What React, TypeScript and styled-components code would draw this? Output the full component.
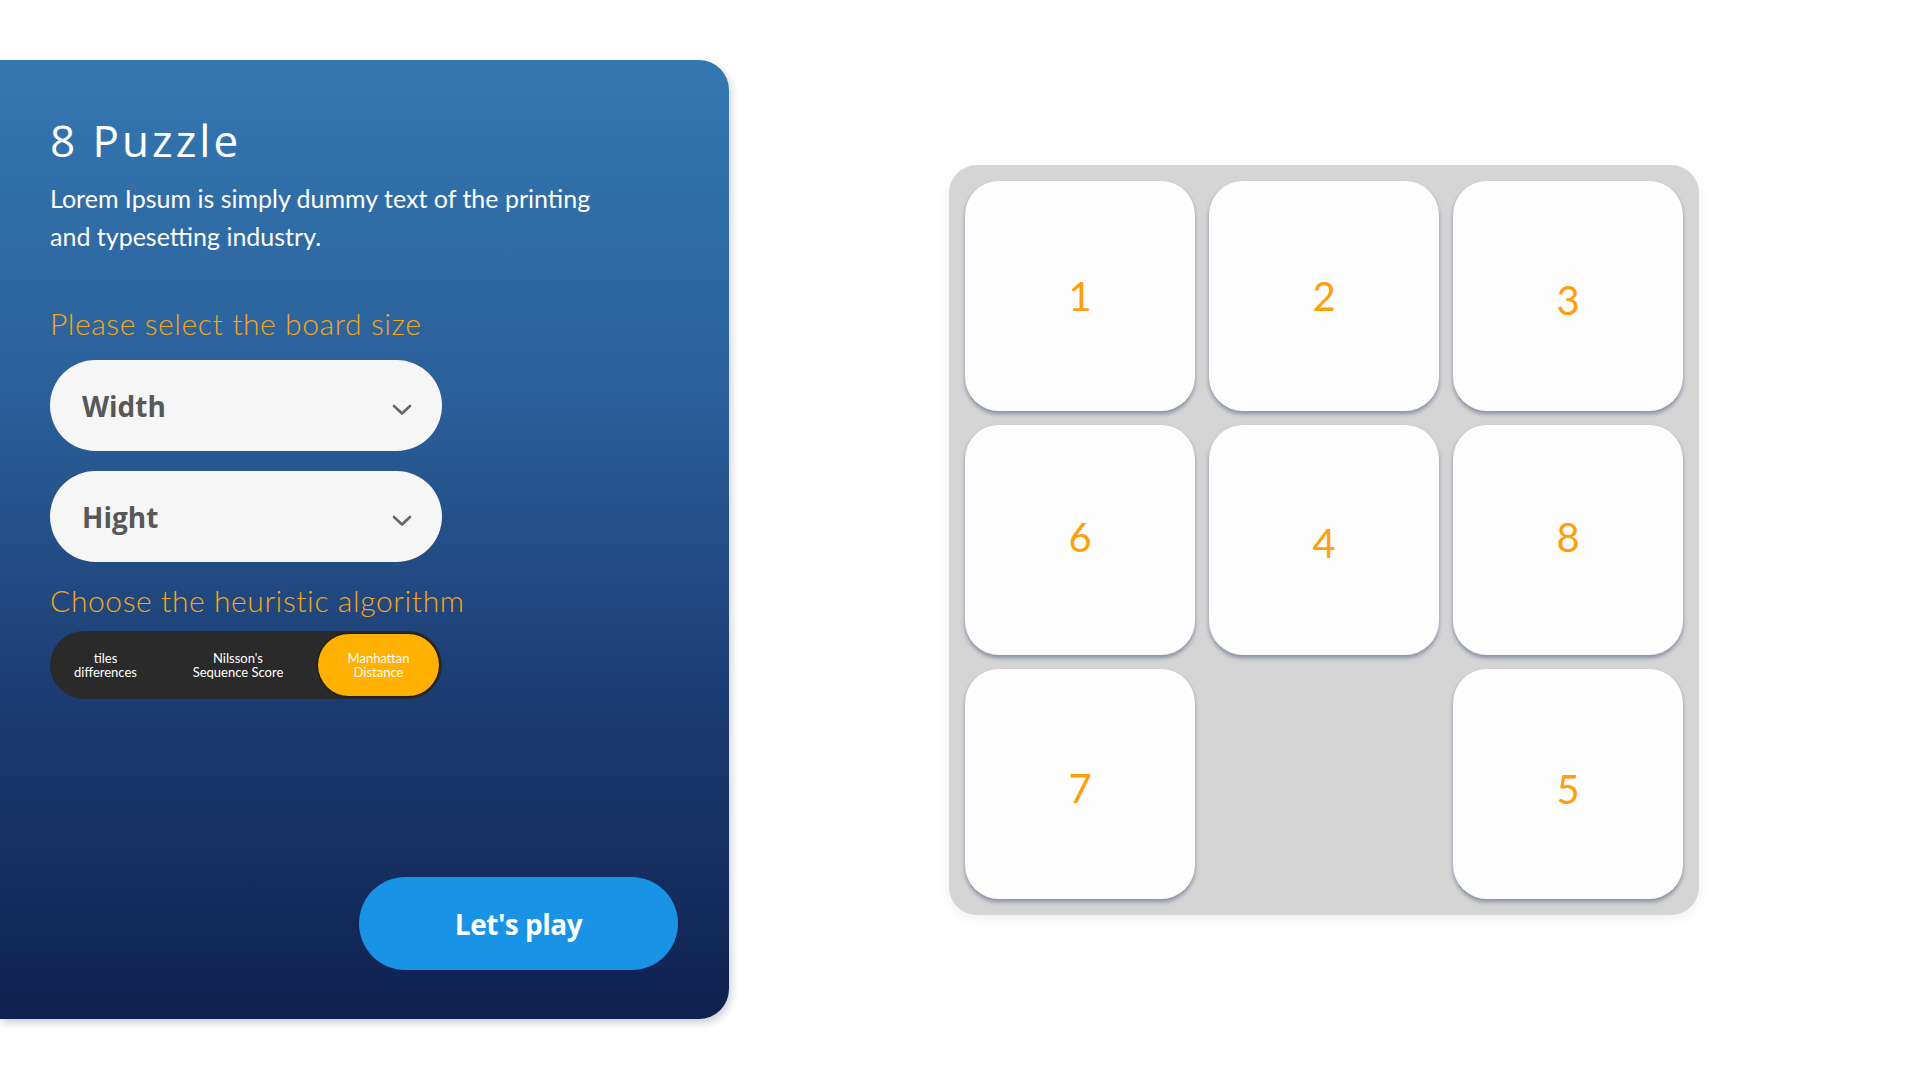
import React from 'react';
import styled, { createGlobalStyle } from 'styled-components';

const GlobalStyle = createGlobalStyle`
  html, body {
    margin: 0;
    padding: 0;
    background: #ffffff;
    font-family: 'Lato', 'Open Sans', sans-serif;
  }
`

const Page = styled.div`
  display: flex;
  align-items: flex-start;
  width: 1920px;
  height: 1080px;
  overflow: hidden;
`

const Panel = styled.div`
  width: 729px;
  height: 959px;
  margin-top: 60px;
  box-sizing: border-box;
  padding: 54px 0 49px 50px;
  display: flex;
  flex-direction: column;
  border-radius: 0 30px 30px 0;
  background: linear-gradient(180deg, #3478b2 0%, #2b5f99 35%, #1c3e74 65%, #0e2150 100%);
  box-shadow: 2px 4px 8px rgba(20, 30, 60, 0.22);
`

const Title = styled.h1`
  margin: 0;
  font-family: 'Open Sans', sans-serif;
  font-weight: 400;
  font-size: 44px;
  line-height: 52px;
  letter-spacing: 3px;
  color: #ffffff;
`

const Description = styled.p`
  margin: 13px 0 0;
  width: 565px;
  font-size: 25px;
  line-height: 38px;
  color: #ffffff;
`

const Heading = styled.h2<{ $gap: number }>`
  margin: ${p => p.$gap}px 0 0;
  font-weight: 300;
  font-size: 30px;
  line-height: 34px;
  letter-spacing: 0.6px;
  color: #f7a614;
`

const Select = styled.div<{ $gap: number }>`
  width: 392px;
  height: 91px;
  margin-top: ${p => p.$gap}px;
  box-sizing: border-box;
  padding: 0 30px 0 32px;
  display: flex;
  align-items: center;
  justify-content: space-between;
  background: #f6f6f6;
  border-radius: 46px;
`

const SelectLabel = styled.span`
  font-family: 'Open Sans', sans-serif;
  font-weight: 700;
  font-size: 28px;
  color: #585858;
`

const Chevron = styled.svg`
  width: 20px;
  height: 12px;
  margin-top: 8px;
`

const Toggle = styled.div`
  width: 392px;
  height: 68px;
  margin-top: 14px;
  box-sizing: border-box;
  padding: 3px;
  display: grid;
  grid-template-columns: 105px 160px 1fr;
  background: #2a2a2a;
  border-radius: 34px;
`

const Option = styled.div<{ $active?: boolean }>`
  display: flex;
  align-items: center;
  justify-content: center;
  text-align: center;
  font-size: 13px;
  line-height: 14px;
  color: #ffffff;
  border-radius: 31px;
  background: ${p => (p.$active ? '#ffb000' : 'transparent')};
  box-shadow: ${p => (p.$active ? '0 0 2px 1px rgba(0, 0, 0, 0.35)' : 'none')};
`

const Footer = styled.div`
  margin-top: auto;
  display: flex;
  justify-content: flex-end;
  padding-right: 51px;
`

const PlayButton = styled.button`
  width: 319px;
  height: 93px;
  border: none;
  border-radius: 47px;
  background: #1893e6;
  color: #ffffff;
  font-family: 'Open Sans', sans-serif;
  font-weight: 700;
  font-size: 28px;
  letter-spacing: -0.5px;
  cursor: pointer;
`

const Board = styled.div`
  margin: 165px 0 0 220px;
  padding: 16px;
  display: grid;
  grid-template-columns: repeat(3, 230px);
  grid-template-rows: repeat(3, 230px);
  gap: 14px;
  background: #d5d5d5;
  border-radius: 28px;
  box-shadow: 0 4px 12px rgba(60, 70, 110, 0.08);
`

const Tile = styled.div`
  display: flex;
  align-items: center;
  justify-content: center;
  background: #fdfdfd;
  border-radius: 34px;
  box-shadow: 0 3px 4px rgba(110, 118, 145, 0.75);
`

const Number = styled.span<{ $shift: number }>`
  font-family: 'Lato', sans-serif;
  font-size: 40px;
  color: #ff9f0a;
  transform: translateY(${p => p.$shift}px);
`

const Blank = styled.div``

const tiles = [
  { n: 1, shift: 0 },
  { n: 2, shift: 0 },
  { n: 3, shift: 4 },
  { n: 6, shift: -3 },
  { n: 4, shift: 3 },
  { n: 8, shift: -3 },
  { n: 7, shift: 4 },
  { n: 0, shift: 0 },
  { n: 5, shift: 5 },
]

const ChevronIcon: React.FC = () => (
  <Chevron viewBox="0 0 20 12">
    <path d="M2 2 L10 9.5 L18 2" fill="none" stroke="#666" strokeWidth="2.6" strokeLinecap="round" strokeLinejoin="round" />
  </Chevron>
)

const App: React.FC = () => {
  return (
    <Page>
      <GlobalStyle />
      <Panel>
        <Title>8 Puzzle</Title>
        <Description>
          Lorem Ipsum is simply dummy text of the printing and typesetting industry.
        </Description>
        <Heading $gap={51}>Please select the board size</Heading>
        <Select $gap={20}>
          <SelectLabel>Width</SelectLabel>
          <ChevronIcon />
        </Select>
        <Select $gap={20}>
          <SelectLabel>Hight</SelectLabel>
          <ChevronIcon />
        </Select>
        <Heading $gap={21}>Choose the heuristic algorithm</Heading>
        <Toggle>
          <Option>tiles<br />differences</Option>
          <Option>Nilsson's<br />Sequence Score</Option>
          <Option $active>Manhattan<br />Distance</Option>
        </Toggle>
        <Footer>
          <PlayButton>Let's play</PlayButton>
        </Footer>
      </Panel>
      <Board>
        {tiles.map((t, i) =>
          t.n === 0 ? (
            <Blank key={i} />
          ) : (
            <Tile key={i}>
              <Number $shift={t.shift}>{t.n}</Number>
            </Tile>
          )
        )}
      </Board>
    </Page>
  )
}

export default App
